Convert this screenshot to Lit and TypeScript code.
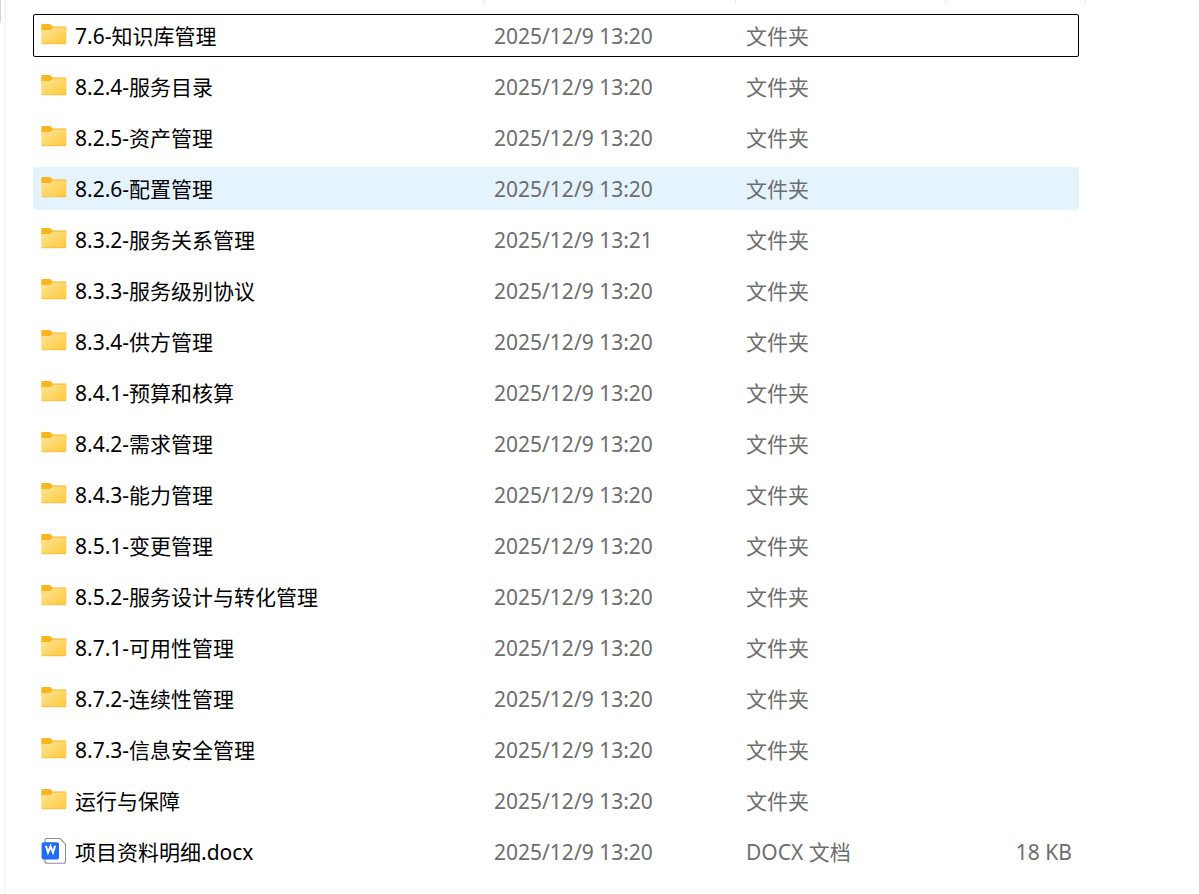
import { LitElement, html, css, svg } from "lit";
import { customElement, property } from "lit/decorators.js";
import { classMap } from "lit/directives/class-map.js";

interface Entry {
  name: string;
  date: string;
  type: string;
  size?: string;
  state?: "focused" | "hovered";
}

const folder = (name: string, date = "2025/12/9 13:20", state?: Entry["state"]): Entry => ({
  name,
  date,
  type: "文件夹",
  state,
});

const entries: Entry[] = [
  folder("7.6-知识库管理", undefined, "focused"),
  folder("8.2.4-服务目录"),
  folder("8.2.5-资产管理"),
  folder("8.2.6-配置管理", undefined, "hovered"),
  folder("8.3.2-服务关系管理", "2025/12/9 13:21"),
  folder("8.3.3-服务级别协议"),
  folder("8.3.4-供方管理"),
  folder("8.4.1-预算和核算"),
  folder("8.4.2-需求管理"),
  folder("8.4.3-能力管理"),
  folder("8.5.1-变更管理"),
  folder("8.5.2-服务设计与转化管理"),
  folder("8.7.1-可用性管理"),
  folder("8.7.2-连续性管理"),
  folder("8.7.3-信息安全管理"),
  folder("运行与保障"),
  { name: "项目资料明细.docx", date: "2025/12/9 13:20", type: "DOCX 文档", size: "18 KB" },
];

@customElement("file-icon")
class FileIcon extends LitElement {
  @property({ type: Boolean }) document = false;

  static styles = css`
    :host { display: block; width: 26px; height: 28px; }
    svg { display: block; }
  `;

  render() {
    const folderShape = svg`
      <defs>
        <linearGradient id="front" x1="0" y1="0" x2="1" y2="1">
          <stop offset="0" stop-color="#ffe59b" />
          <stop offset="1" stop-color="#ffc937" />
        </linearGradient>
      </defs>
      <path d="M.3 3.200A1.200 1.200 0 0 1 1.500 2H8.500q.8 0 1.300.6L11.600 4.600H24.100a1.200 1.200 0 0 1 1.200 1.200V11H.3z" fill="#f8b51e" />
      <path d="M.3 8H8.300q.9 0 1.500-.6L11.200 6q.4-.4 1.200-.4H25.300V20.800a1.200 1.200 0 0 1-1.200 1.200H1.500A1.200 1.200 0 0 1 .3 20.800z" fill="url(#front)" />
      <path d="M.8 21.500Q1.100 21.800 1.500 21.800H24.100q.5 0 .8-.3" fill="none" stroke="#eeb73d" stroke-width=".7" />`;
    const documentShape = svg`
      <path d="M5.500 .5H18.800L24.500 6.200V23.300a2 2 0 0 1-2 2H6a2 2 0 0 1-2-2V2A1.500 1.500 0 0 1 5.500 .5z" fill="#fff" stroke="#8c8f94" stroke-width="1.100" />
      <rect x=".6" y="4.200" width="17.400" height="17.400" rx="2" fill="#1f6cf5" />
      <path d="M4.900 7.800L7 14.600L9.500 8.300L12 14.600L14.100 7.800" fill="none" stroke="#fff" stroke-width="2" stroke-linejoin="miter" />`;
    return html`<svg width="26" height="28" viewBox="0 0 26 28" aria-hidden="true">
      ${this.document ? documentShape : folderShape}
    </svg>`;
  }
}

@customElement("app-root")
class AppRoot extends LitElement {
  static styles = css`
    :host {
      display: grid;
      grid-template-columns: 6px minmax(0, 1fr);
      min-height: 100vh;
      box-sizing: border-box;
      background: #fff;
      color: #000;
      font-family: "Noto Sans", "Noto Sans CJK SC", sans-serif;
      font-size: 21px;
      line-height: 28px;
    }
    .gutter {
      box-sizing: border-box;
      border-right: 2px solid #f6f6f6;
    }
    .thumb {
      width: 1px;
      height: 23px;
      background: #d4d4d4;
    }
    .pane { padding: 0 120px 0 27px; }
    .dividers {
      display: grid;
      grid-template-columns: 451px 252px 210px 140px;
      height: 3px;
      margin-bottom: 3px;
    }
    .dividers span { border-right: 1px solid #e2e2e2; }
    table {
      width: 100%;
      table-layout: fixed;
      border-collapse: separate;
      border-spacing: 0 8px;
    }
    .date-col { width: 252px; }
    .type-col { width: 210px; }
    .size-col { width: 123px; }
    tr { border-radius: 2px; }
    td {
      height: 43px;
      padding: 0;
      color: #6d6d6d;
      white-space: nowrap;
      vertical-align: middle;
    }
    .focused { outline: 1px solid #000; outline-offset: -1px; }
    .hovered td { background: #e5f3ff; }
    .hovered td:first-child { border-radius: 2px 0 0 2px; }
    .hovered td:last-child { border-radius: 0 2px 2px 0; }
    .name {
      display: flex;
      align-items: center;
      gap: 8px;
      padding-left: 8px;
      color: #000;
    }
    .size { padding-right: 7px; text-align: right; }
  `;

  render() {
    return html`
      <div class="gutter"><div class="thumb"></div></div>
      <main class="pane">
        <div class="dividers"><span></span><span></span><span></span><span></span></div>
        <table>
          <colgroup>
            <col />
            <col class="date-col" />
            <col class="type-col" />
            <col class="size-col" />
          </colgroup>
          <tbody>
            ${entries.map(
              (e) => html`<tr class=${classMap({ focused: e.state === "focused", hovered: e.state === "hovered" })}>
                <td><div class="name"><file-icon ?document=${!!e.size}></file-icon><span>${e.name}</span></div></td>
                <td>${e.date}</td>
                <td>${e.type}</td>
                <td class="size">${e.size ?? ""}</td>
              </tr>`
            )}
          </tbody>
        </table>
      </main>
    `;
  }
}
